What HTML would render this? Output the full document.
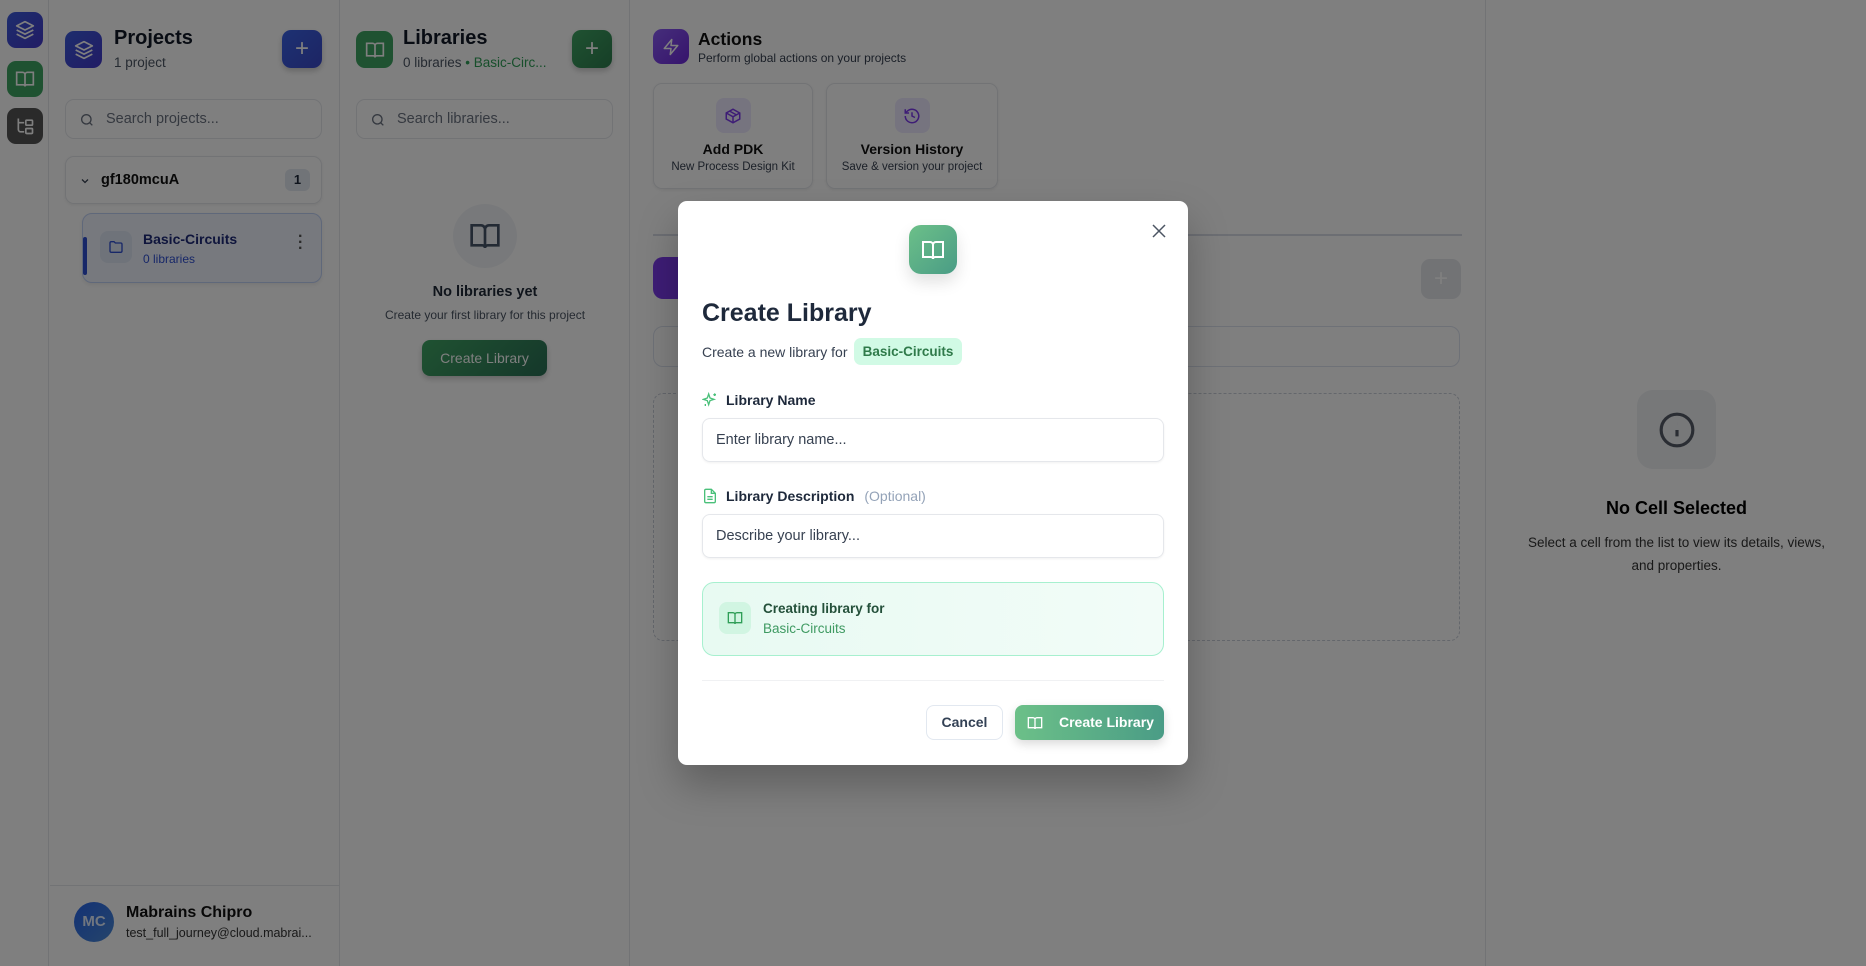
<!DOCTYPE html>
<html><head><meta charset="utf-8"><style>
*{box-sizing:border-box;margin:0;padding:0}
body{width:1866px;height:966px;position:relative;overflow:hidden;background:#fff;font-family:"Liberation Sans","DejaVu Sans",sans-serif;color:#1e293b}
.abs{position:absolute}
.rail{left:0;top:0;width:49px;height:966px;background:#fff;border-right:1px solid #e5e7eb}
.ri{position:absolute;left:7px;width:36px;height:36px;border-radius:9px;display:flex;align-items:center;justify-content:center}
.panel{top:0;height:966px;border-right:1px solid #e5e7eb;background:#fff}
.hicon{position:absolute;width:37px;height:37px;border-radius:9px;display:flex;align-items:center;justify-content:center}
.title{position:absolute;font-size:20px;font-weight:bold;color:#111827}
.sub{position:absolute;font-size:13.5px;color:#4b5563;white-space:nowrap}
.plus{position:absolute;width:40px;height:38px;border-radius:9px;color:#fff;font-size:24px;display:flex;align-items:center;justify-content:center;box-shadow:0 3px 6px rgba(0,0,0,.2)}
.search{position:absolute;height:40px;border:1px solid #e5e7eb;border-radius:9px;background:#fff;font-size:14.5px;color:#6b7280;display:flex;align-items:center;padding-left:40px}
.search svg{position:absolute;left:13px;top:12px}
.overlay{left:0;top:0;width:1866px;height:966px;background:rgba(0,0,0,.5)}
.modal{left:678px;top:201px;width:510px;height:564px;background:#fff;border-radius:9px;box-shadow:0 20px 40px rgba(0,0,0,.25)}
.m{position:absolute}
.inp{position:absolute;left:24px;width:462px;height:44px;border:1px solid #e5e7eb;border-radius:8px;font-size:14.5px;color:#374151;display:flex;align-items:center;padding-left:13px;box-shadow:0 1px 2px rgba(0,0,0,.06)}
.lab{position:absolute;left:24px;font-size:14px;font-weight:bold;color:#1e293b;display:flex;align-items:center;gap:8px}
</style></head><body>

<div class="abs rail">
 <div class="ri" style="top:12px;background:linear-gradient(135deg,#3b5bdb,#4338ca)"><svg width="20" height="20" viewBox="0 0 24 24" fill="none" stroke="#fff" stroke-width="2" stroke-linejoin="round"><path d="M12 2 2 7l10 5 10-5-10-5z"/><path d="m2 12 10 5 10-5"/><path d="m2 17 10 5 10-5"/></svg></div>
 <div class="ri" style="top:61px;background:#3fa463"><svg width="20" height="20" viewBox="0 0 24 24" fill="none" stroke="#fff" stroke-width="2"><path d="M2 4h7a3 3 0 0 1 3 3v14a2 2 0 0 0-2-2H2zM22 4h-7a3 3 0 0 0-3 3v14a2 2 0 0 1 2-2h8z"/></svg></div>
 <div class="ri" style="top:108px;background:#555"><svg width="20" height="20" viewBox="0 0 24 24" fill="none" stroke="#fff" stroke-width="2"><path d="M4 3v13a3 3 0 0 0 3 3h4M4 8h7"/><rect x="13" y="5" width="8" height="6" rx="1"/><rect x="13" y="15" width="8" height="6" rx="1"/></svg></div>
</div>

<!-- Projects -->
<div class="abs panel" style="left:50px;width:290px">
 <div class="hicon" style="left:15px;top:31px;background:linear-gradient(135deg,#3b5bdb,#4338ca)"><svg width="20" height="20" viewBox="0 0 24 24" fill="none" stroke="#fff" stroke-width="2" stroke-linejoin="round"><path d="M12 2 2 7l10 5 10-5-10-5z"/><path d="m2 12 10 5 10-5"/><path d="m2 17 10 5 10-5"/></svg></div>
 <div class="title" style="left:64px;top:27px">Projects</div>
 <div class="sub" style="left:64px;top:55px">1 project</div>
 <div class="plus" style="left:232px;top:30px;background:linear-gradient(135deg,#3b63e6,#3b49c8)">+</div>
 <div class="search" style="left:15px;top:99px;width:257px"><svg width="16" height="16" viewBox="0 0 24 24" fill="none" stroke="#6b7280" stroke-width="2"><circle cx="11" cy="11" r="7"/><path d="m20 20-4-4"/></svg>Search projects...</div>
 <div class="abs" style="left:15px;top:156px;width:257px;height:48px;border:1px solid #e5e7eb;border-radius:9px;box-shadow:0 1px 3px rgba(0,0,0,.08)">
  <svg class="abs" style="left:13px;top:18px" width="12" height="12" viewBox="0 0 24 24" fill="none" stroke="#374151" stroke-width="2.5"><path d="m6 9 6 6 6-6"/></svg>
  <div class="abs" style="left:35px;top:15px;font-size:14.5px;font-weight:bold;color:#111">gf180mcuA</div>
  <div class="abs" style="left:219px;top:12px;width:25px;height:22px;border-radius:6px;background:#e2e8f0;font-size:13px;font-weight:bold;text-align:center;line-height:22px">1</div>
 </div>
 <div class="abs" style="left:32px;top:213px;width:240px;height:70px;border:1px solid #bfd0f5;border-radius:10px;background:#eef3fd;box-shadow:0 2px 4px rgba(0,0,0,.08)">
  <div class="abs" style="left:0;top:23px;width:4px;height:38px;background:#2f4fd1;border-radius:2px"></div>
  <div class="abs" style="left:17px;top:17px;width:32px;height:32px;border-radius:8px;background:#dfe6f4;display:flex;align-items:center;justify-content:center"><svg width="16" height="16" viewBox="0 0 24 24" fill="none" stroke="#2f4fd1" stroke-width="2"><path d="M3 6a2 2 0 0 1 2-2h4l2 2h8a2 2 0 0 1 2 2v10a2 2 0 0 1-2 2H5a2 2 0 0 1-2-2z"/></svg></div>
  <div class="abs" style="left:60px;top:17px;font-size:14px;font-weight:bold;color:#1e2a78">Basic-Circuits</div>
  <div class="abs" style="left:60px;top:38px;font-size:12px;color:#2f4fd1">0 libraries</div>
  <div class="abs" style="left:215px;top:20px;font-size:16px;font-weight:bold;color:#555;line-height:6px">·<br>·<br>·</div>
 </div>
 <div class="abs" style="left:0;top:885px;width:290px;border-top:1px solid #e5e7eb"></div>
 <div class="abs" style="left:24px;top:902px;width:40px;height:40px;border-radius:50%;background:linear-gradient(135deg,#2563eb,#4b8ad6);color:#e0ecff;font-size:15px;font-weight:bold;text-align:center;line-height:40px">MC</div>
 <div class="abs" style="left:76px;top:904px;font-size:16px;font-weight:bold;color:#111">Mabrains Chipro</div>
 <div class="abs" style="left:76px;top:926px;font-size:12.5px;color:#333">test_full_journey@cloud.mabrai...</div>
</div>

<!-- Libraries -->
<div class="abs panel" style="left:340px;width:290px">
 <div class="hicon" style="left:16px;top:31px;background:#3fa463"><svg width="20" height="20" viewBox="0 0 24 24" fill="none" stroke="#fff" stroke-width="2"><path d="M2 4h7a3 3 0 0 1 3 3v14a2 2 0 0 0-2-2H2zM22 4h-7a3 3 0 0 0-3 3v14a2 2 0 0 1 2-2h8z"/></svg></div>
 <div class="title" style="left:63px;top:27px">Libraries</div>
 <div class="sub" style="left:63px;top:55px">0 libraries <span style="color:#2f9e57">• Basic-Circ...</span></div>
 <div class="plus" style="left:232px;top:30px;background:linear-gradient(135deg,#3fa463,#2d7d4e)">+</div>
 <div class="search" style="left:16px;top:99px;width:257px"><svg width="16" height="16" viewBox="0 0 24 24" fill="none" stroke="#6b7280" stroke-width="2"><circle cx="11" cy="11" r="7"/><path d="m20 20-4-4"/></svg>Search libraries...</div>
 <div class="abs" style="left:113px;top:204px;width:64px;height:64px;border-radius:50%;background:#f1f3f6;display:flex;align-items:center;justify-content:center"><svg width="32" height="32" viewBox="0 0 24 24" fill="none" stroke="#475569" stroke-width="2"><path d="M2 4h7a3 3 0 0 1 3 3v14a2 2 0 0 0-2-2H2zM22 4h-7a3 3 0 0 0-3 3v14a2 2 0 0 1 2-2h8z"/></svg></div>
 <div class="abs" style="left:0;width:290px;top:284px;text-align:center;font-size:14.5px;font-weight:bold;color:#1f2937">No libraries yet</div>
 <div class="abs" style="left:0;width:290px;top:308px;text-align:center;font-size:12px;color:#4b5563">Create your first library for this project</div>
 <div class="abs" style="left:82px;top:340px;width:125px;height:36px;border-radius:8px;background:linear-gradient(135deg,#3fa463,#2a6f55);color:#fff;font-size:14px;text-align:center;line-height:36px;box-shadow:0 3px 6px rgba(0,0,0,.2)">Create Library</div>
</div>

<!-- Main -->
<div class="abs" style="left:631px;top:0;width:855px;height:966px;background:#fff;border-right:1px solid #e5e7eb">
 <div class="hicon" style="left:22px;top:29px;width:36px;height:35px;background:linear-gradient(135deg,#8b5cf6,#6d28d9)"><svg width="18" height="18" viewBox="0 0 24 24" fill="none" stroke="#fff" stroke-width="2" stroke-linejoin="round"><path d="M13 2 3 14h9l-1 8 10-12h-9z"/></svg></div>
 <div class="abs" style="left:67px;top:29px;font-size:17.5px;font-weight:bold;color:#111">Actions</div>
 <div class="abs" style="left:67px;top:51px;font-size:12px;color:#374151">Perform global actions on your projects</div>
 <div class="abs" style="left:22px;top:83px;width:160px;height:106px;border:1px solid #e5e7eb;border-radius:9px;text-align:center;box-shadow:0 1px 3px rgba(0,0,0,.08)">
  <div style="margin:14px auto 0;width:35px;height:35px;border-radius:8px;background:#ede9fe;display:flex;align-items:center;justify-content:center"><svg width="18" height="18" viewBox="0 0 24 24" fill="none" stroke="#7c3aed" stroke-width="2"><path d="M21 8 12 3 3 8v8l9 5 9-5z"/><path d="m3 8 9 5 9-5M12 13v8M7.5 5.5l9 5"/></svg></div>
  <div style="margin-top:8px;font-size:14px;font-weight:bold;color:#111">Add PDK</div>
  <div style="margin-top:4px;font-size:11.5px;color:#374151">New Process Design Kit</div>
 </div>
 <div class="abs" style="left:195px;top:83px;width:172px;height:106px;border:1px solid #e5e7eb;border-radius:9px;text-align:center;box-shadow:0 1px 3px rgba(0,0,0,.08)">
  <div style="margin:14px auto 0;width:35px;height:35px;border-radius:8px;background:#ede9fe;display:flex;align-items:center;justify-content:center"><svg width="18" height="18" viewBox="0 0 24 24" fill="none" stroke="#7c3aed" stroke-width="2"><path d="M3 12a9 9 0 1 0 3-6.7L3 8"/><path d="M3 3v5h5M12 7v5l4 2"/></svg></div>
  <div style="margin-top:8px;font-size:14px;font-weight:bold;color:#111">Version History</div>
  <div style="margin-top:4px;font-size:11.5px;color:#374151">Save &amp; version your project</div>
 </div>
 <div class="abs" style="left:22px;top:234px;width:809px;border-top:2px solid #d8dce6"></div>
 <div class="abs" style="left:22px;top:257px;width:37px;height:42px;border-radius:10px;background:#7c3aed"></div>
 <div class="abs" style="left:790px;top:259px;width:40px;height:40px;border-radius:9px;background:#e5e7eb;color:#fff;font-size:24px;text-align:center;line-height:40px">+</div>
 <div class="abs" style="left:22px;top:326px;width:807px;height:41px;border:1px solid #dde3ee;border-radius:10px"></div>
 <div class="abs" style="left:22px;top:393px;width:807px;height:248px;border:1.5px dashed #c9ced8;border-radius:10px"></div>
</div>

<!-- Right -->
<div class="abs" style="left:1487px;top:0;width:379px;height:966px;background:#fff">
 <div class="abs" style="left:150px;top:390px;width:79px;height:79px;border-radius:16px;background:#eef0f3;display:flex;align-items:center;justify-content:center"><svg width="38" height="38" viewBox="0 0 24 24" fill="none" stroke="#555b66" stroke-width="2"><circle cx="12" cy="12" r="10"/><path d="M12 16v-4M12 8h.01"/></svg></div>
 <div class="abs" style="left:0;width:379px;top:498px;text-align:center;font-size:18px;font-weight:bold;color:#000">No Cell Selected</div>
 <div class="abs" style="left:0;width:379px;top:531px;text-align:center;font-size:13.5px;line-height:23px;color:#333">Select a cell from the list to view its details, views,<br>and properties.</div>
</div>

<div class="abs overlay"></div>

<!-- Modal -->
<div class="abs modal">
 <svg class="m" style="left:472px;top:21px" width="18" height="18" viewBox="0 0 24 24" fill="none" stroke="#4b5563" stroke-width="2"><path d="M4 4l16 16M20 4 4 20"/></svg>
 <div class="m" style="left:231px;top:24px;width:48px;height:49px;border-radius:12px;background:linear-gradient(135deg,#6cc088,#4a9c86);display:flex;align-items:center;justify-content:center;box-shadow:0 8px 16px rgba(0,0,0,.12)"><svg width="24" height="24" viewBox="0 0 24 24" fill="none" stroke="#fff" stroke-width="2"><path d="M2 4h7a3 3 0 0 1 3 3v14a2 2 0 0 0-2-2H2zM22 4h-7a3 3 0 0 0-3 3v14a2 2 0 0 1 2-2h8z"/></svg></div>
 <div class="m" style="left:24px;top:98px;font-size:25px;font-weight:bold;color:#1e293b">Create Library</div>
 <div class="m" style="left:24px;top:143px;font-size:14px;color:#374151">Create a new library for</div>
 <div class="m" style="left:176px;top:137px;width:108px;height:27px;border-radius:7px;background:#d1fae5;color:#2f7a4a;font-size:13.5px;font-weight:bold;text-align:center;line-height:27px">Basic-Circuits</div>
 <div class="lab" style="top:191px"><svg width="16" height="16" viewBox="0 0 24 24" fill="none" stroke="#4ac07a" stroke-width="2"><path d="M10 3l2 6 6 2-6 2-2 6-2-6-6-2 6-2z"/><path d="M19 2v4M17 4h4M5 18v3"/></svg>Library Name</div>
 <div class="inp" style="top:217px">Enter library name...</div>
 <div class="lab" style="top:287px"><svg width="16" height="16" viewBox="0 0 24 24" fill="none" stroke="#4ac07a" stroke-width="2"><path d="M14 2H6a2 2 0 0 0-2 2v16a2 2 0 0 0 2 2h12a2 2 0 0 0 2-2V8z"/><path d="M14 2v6h6M8 13h8M8 17h8"/></svg>Library Description <span style="font-weight:normal;color:#94a3b8;margin-left:2px">(Optional)</span></div>
 <div class="inp" style="top:313px">Describe your library...</div>
 <div class="m" style="left:24px;top:381px;width:462px;height:74px;border:1.5px solid #a7f0cf;border-radius:12px;background:linear-gradient(90deg,#e8faf2,#f2fcf8)">
  <div class="m" style="left:16px;top:19px;width:32px;height:32px;border-radius:8px;background:#d1f5e2;display:flex;align-items:center;justify-content:center"><svg width="16" height="16" viewBox="0 0 24 24" fill="none" stroke="#2f9e57" stroke-width="2"><path d="M2 4h7a3 3 0 0 1 3 3v14a2 2 0 0 0-2-2H2zM22 4h-7a3 3 0 0 0-3 3v14a2 2 0 0 1 2-2h8z"/></svg></div>
  <div class="m" style="left:60px;top:18px;font-size:13.5px;font-weight:bold;color:#24503a">Creating library for</div>
  <div class="m" style="left:60px;top:38px;font-size:13.5px;color:#3f9a62">Basic-Circuits</div>
 </div>
 <div class="m" style="left:24px;top:479px;width:462px;border-top:1px solid #f0f1f3"></div>
 <div class="m" style="left:248px;top:504px;width:77px;height:35px;border:1px solid #e2e8f0;border-radius:8px;font-size:14px;font-weight:bold;color:#334155;text-align:center;line-height:33px">Cancel</div>
 <div class="m" style="left:337px;top:504px;width:149px;height:35px;border-radius:8px;background:linear-gradient(90deg,#6cc088,#4a9c86);color:#fff;font-size:14px;font-weight:bold;line-height:35px;box-shadow:0 4px 10px rgba(0,0,0,.15)"><svg class="m" style="left:12px;top:10px" width="16" height="16" viewBox="0 0 24 24" fill="none" stroke="#fff" stroke-width="2"><path d="M2 4h7a3 3 0 0 1 3 3v14a2 2 0 0 0-2-2H2zM22 4h-7a3 3 0 0 0-3 3v14a2 2 0 0 1 2-2h8z"/></svg><span style="position:absolute;left:44px">Create Library</span></div>
</div>
</body></html>
